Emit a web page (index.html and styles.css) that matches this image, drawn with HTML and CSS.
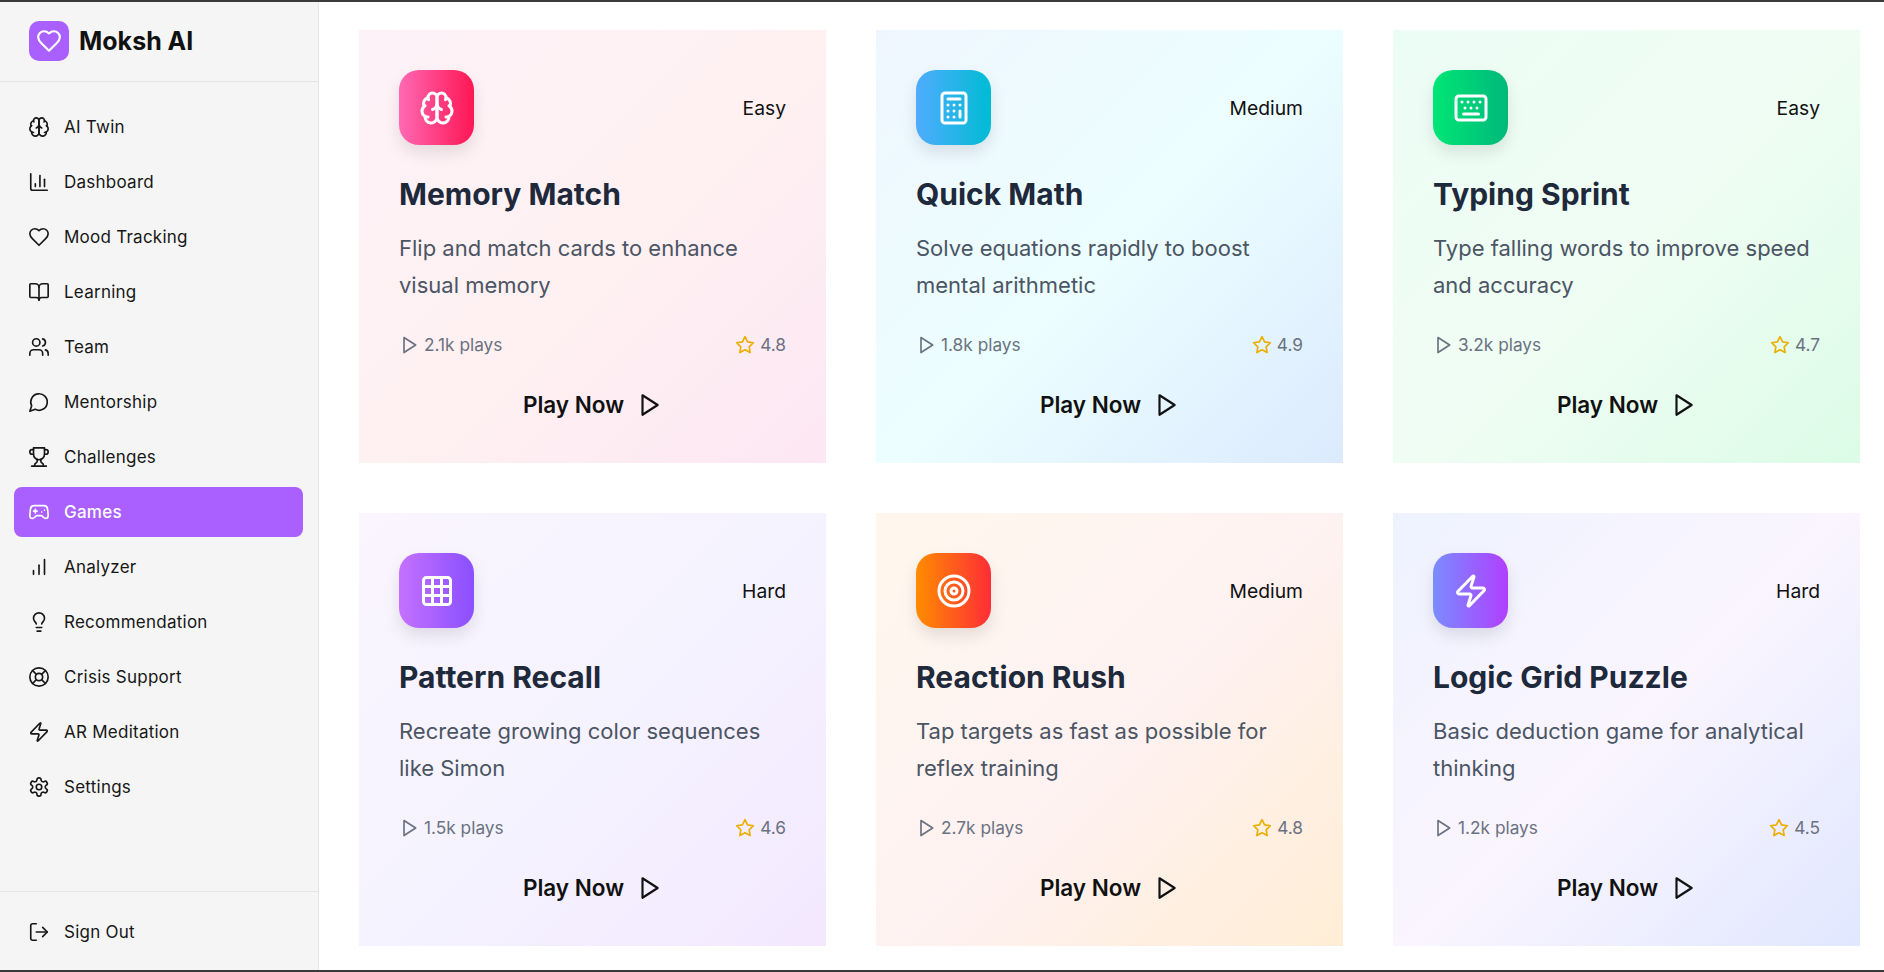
FILE: index.html
```html
<!DOCTYPE html>
<html lang="en">
<head>
    <meta charset="UTF-8">
    <meta name="viewport" content="width=device-width, initial-scale=1.0">
    <title>Moksh AI - Games</title>
    <link rel="stylesheet" href="styles.css">
</head>
<body>
    <svg class="icon-sprite" xmlns="http://www.w3.org/2000/svg">
        <symbol id="i-brain" viewBox="0 0 24 24"><path d="M12 5a3 3 0 1 0-5.997.125 4 4 0 0 0-2.526 5.77 4 4 0 0 0 .556 6.588A4 4 0 1 0 12 18Z"/><path d="M12 5a3 3 0 1 1 5.997.125 4 4 0 0 1 2.526 5.77 4 4 0 0 1-.556 6.588A4 4 0 1 1 12 18Z"/><path d="M15 13a4.5 4.5 0 0 1-3-4 4.5 4.5 0 0 1-3 4"/><path d="M17.599 6.5a3 3 0 0 0 .399-1.375"/><path d="M6.003 5.125A3 3 0 0 0 6.401 6.5"/><path d="M3.477 10.896a4 4 0 0 1 .585-.396"/><path d="M19.938 10.5a4 4 0 0 1 .585.396"/><path d="M6 18a4 4 0 0 1-1.967-.516"/><path d="M19.967 17.484A4 4 0 0 1 18 18"/></symbol>
        <symbol id="i-chart" viewBox="0 0 24 24"><path d="M3 3v16a2 2 0 0 0 2 2h16"/><path d="M18 17V9"/><path d="M13 17V5"/><path d="M8 17v-3"/></symbol>
        <symbol id="i-heart" viewBox="0 0 24 24"><path d="M19 14c1.49-1.46 3-3.21 3-5.5A5.5 5.5 0 0 0 16.5 3c-1.76 0-3 .5-4.5 2-1.5-1.5-2.74-2-4.5-2A5.5 5.5 0 0 0 2 8.5c0 2.3 1.5 4.05 3 5.5l7 7Z"/></symbol>
        <symbol id="i-book" viewBox="0 0 24 24"><path d="M12 7v14"/><path d="M3 18a1 1 0 0 1-1-1V4a1 1 0 0 1 1-1h5a4 4 0 0 1 4 4 4 4 0 0 1 4-4h5a1 1 0 0 1 1 1v13a1 1 0 0 1-1 1h-6a3 3 0 0 0-3 3 3 3 0 0 0-3-3z"/></symbol>
        <symbol id="i-users" viewBox="0 0 24 24"><path d="M16 21v-2a4 4 0 0 0-4-4H6a4 4 0 0 0-4 4v2"/><circle cx="9" cy="7" r="4"/><path d="M22 21v-2a4 4 0 0 0-3-3.87"/><path d="M16 3.13a4 4 0 0 1 0 7.75"/></symbol>
        <symbol id="i-message" viewBox="0 0 24 24"><path d="M7.9 20A9 9 0 1 0 4 16.1L2 22Z"/></symbol>
        <symbol id="i-trophy" viewBox="0 0 24 24"><path d="M6 9H4.5a2.5 2.5 0 0 1 0-5H6"/><path d="M18 9h1.5a2.5 2.5 0 0 0 0-5H18"/><path d="M4 22h16"/><path d="M10 14.66V17c0 .55-.47.98-.97 1.21C7.85 18.75 7 20.24 7 22"/><path d="M14 14.66V17c0 .55.47.98.97 1.21C16.15 18.75 17 20.24 17 22"/><path d="M18 2H6v7a6 6 0 0 0 12 0V2Z"/></symbol>
        <symbol id="i-gamepad" viewBox="0 0 24 24"><path d="M6 11h4"/><path d="M8 9v4"/><path d="M15 12h.01"/><path d="M18 10h.01"/><path d="M17.32 5H6.68a4 4 0 0 0-3.978 3.59c-.006.052-.01.101-.017.152C2.604 9.416 2 14.456 2 16a3 3 0 0 0 3 3c1 0 1.5-.5 2-1l1.414-1.414A2 2 0 0 1 9.828 16h4.344a2 2 0 0 1 1.414.586L17 18c.5.5 1 1 2 1a3 3 0 0 0 3-3c0-1.545-.604-6.584-.685-7.258-.007-.05-.011-.1-.017-.151A4 4 0 0 0 17.32 5z"/></symbol>
        <symbol id="i-bars" viewBox="0 0 24 24"><path d="M12 20V10"/><path d="M18 20V4"/><path d="M6 20v-4"/></symbol>
        <symbol id="i-bulb" viewBox="0 0 24 24"><path d="M15 14c.2-1 .7-1.7 1.5-2.5 1-.9 1.5-2.2 1.5-3.5A6 6 0 0 0 6 8c0 1 .2 2.2 1.5 3.5.7.7 1.3 1.5 1.5 2.5"/><path d="M9 18h6"/><path d="M10 22h4"/></symbol>
        <symbol id="i-buoy" viewBox="0 0 24 24"><circle cx="12" cy="12" r="10"/><path d="m4.93 4.93 4.24 4.24"/><path d="m14.83 9.17 4.24-4.24"/><path d="m14.83 14.83 4.24 4.24"/><path d="m9.17 14.83-4.24 4.24"/><circle cx="12" cy="12" r="4"/></symbol>
        <symbol id="i-zap" viewBox="0 0 24 24"><path d="M4 14a1 1 0 0 1-.78-1.63l9.9-10.2a.5.5 0 0 1 .86.46l-1.92 6.02A1 1 0 0 0 13 10h7a1 1 0 0 1 .78 1.63l-9.9 10.2a.5.5 0 0 1-.86-.46l1.92-6.02A1 1 0 0 0 11 14z"/></symbol>
        <symbol id="i-settings" viewBox="0 0 24 24"><path d="M12.22 2h-.44a2 2 0 0 0-2 2v.18a2 2 0 0 1-1 1.73l-.43.25a2 2 0 0 1-2 0l-.15-.08a2 2 0 0 0-2.73.73l-.22.38a2 2 0 0 0 .73 2.73l.15.1a2 2 0 0 1 1 1.72v.51a2 2 0 0 1-1 1.74l-.15.09a2 2 0 0 0-.73 2.73l.22.38a2 2 0 0 0 2.73.73l.15-.08a2 2 0 0 1 2 0l.43.25a2 2 0 0 1 1 1.73V20a2 2 0 0 0 2 2h.44a2 2 0 0 0 2-2v-.18a2 2 0 0 1 1-1.73l.43-.25a2 2 0 0 1 2 0l.15.08a2 2 0 0 0 2.73-.73l.22-.39a2 2 0 0 0-.73-2.73l-.15-.08a2 2 0 0 1-1-1.74v-.5a2 2 0 0 1 1-1.74l.15-.09a2 2 0 0 0 .73-2.73l-.22-.38a2 2 0 0 0-2.73-.73l-.15.08a2 2 0 0 1-2 0l-.43-.25a2 2 0 0 1-1-1.73V4a2 2 0 0 0-2-2z"/><circle cx="12" cy="12" r="3"/></symbol>
        <symbol id="i-logout" viewBox="0 0 24 24"><path d="M9 21H5a2 2 0 0 1-2-2V5a2 2 0 0 1 2-2h4"/><path d="m16 17 5-5-5-5"/><path d="M21 12H9"/></symbol>
        <symbol id="i-play" viewBox="0 0 24 24"><path d="M6 3l14 9-14 9z"/></symbol>
        <symbol id="i-star" viewBox="0 0 24 24"><path d="M12 2l3.09 6.26L22 9.27l-5 4.87 1.18 6.88L12 17.77l-6.18 3.25L7 14.14 2 9.27l6.91-1.01L12 2z"/></symbol>
        <symbol id="i-calc" viewBox="0 0 24 24"><rect width="16" height="20" x="4" y="2" rx="2"/><path d="M8 6h8"/><path d="M16 14v4"/><path d="M16 10h.01"/><path d="M12 10h.01"/><path d="M8 10h.01"/><path d="M12 14h.01"/><path d="M8 14h.01"/><path d="M12 18h.01"/><path d="M8 18h.01"/></symbol>
        <symbol id="i-keyboard" viewBox="0 0 24 24"><path d="M10 8h.01"/><path d="M12 12h.01"/><path d="M14 8h.01"/><path d="M16 12h.01"/><path d="M18 8h.01"/><path d="M6 8h.01"/><path d="M7 16h10"/><path d="M8 12h.01"/><rect width="20" height="16" x="2" y="4" rx="2"/></symbol>
        <symbol id="i-grid" viewBox="0 0 24 24"><rect width="18" height="18" x="3" y="3" rx="2"/><path d="M3 9h18"/><path d="M3 15h18"/><path d="M9 3v18"/><path d="M15 3v18"/></symbol>
        <symbol id="i-target" viewBox="0 0 24 24"><circle cx="12" cy="12" r="10"/><circle cx="12" cy="12" r="6"/><circle cx="12" cy="12" r="2"/></symbol>
    </svg>

    <aside class="sidebar">
        <div class="brand">
            <div class="brand-logo"><svg class="icon"><use href="#i-heart"/></svg></div>
            <div class="brand-name">Moksh AI</div>
        </div>

        <nav class="nav">
            <a class="nav-item" href="#"><svg class="icon"><use href="#i-brain"/></svg>AI Twin</a>
            <a class="nav-item" href="#"><svg class="icon"><use href="#i-chart"/></svg>Dashboard</a>
            <a class="nav-item" href="#"><svg class="icon"><use href="#i-heart"/></svg>Mood Tracking</a>
            <a class="nav-item" href="#"><svg class="icon"><use href="#i-book"/></svg>Learning</a>
            <a class="nav-item" href="#"><svg class="icon"><use href="#i-users"/></svg>Team</a>
            <a class="nav-item" href="#"><svg class="icon"><use href="#i-message"/></svg>Mentorship</a>
            <a class="nav-item" href="#"><svg class="icon"><use href="#i-trophy"/></svg>Challenges</a>
            <a class="nav-item active" href="#"><svg class="icon"><use href="#i-gamepad"/></svg>Games</a>
            <a class="nav-item" href="#"><svg class="icon"><use href="#i-bars"/></svg>Analyzer</a>
            <a class="nav-item" href="#"><svg class="icon"><use href="#i-bulb"/></svg>Recommendation</a>
            <a class="nav-item" href="#"><svg class="icon"><use href="#i-buoy"/></svg>Crisis Support</a>
            <a class="nav-item" href="#"><svg class="icon"><use href="#i-zap"/></svg>AR Meditation</a>
            <a class="nav-item" href="#"><svg class="icon"><use href="#i-settings"/></svg>Settings</a>
        </nav>

        <div class="sidebar-footer">
            <a class="nav-item" href="#"><svg class="icon"><use href="#i-logout"/></svg>Sign Out</a>
        </div>
    </aside>

    <main class="games">
        <article class="card card-pink">
            <div class="card-top">
                <div class="card-icon"><svg class="icon"><use href="#i-brain"/></svg></div>
                <span class="level">Easy</span>
            </div>
            <h3>Memory Match</h3>
            <p>Flip and match cards to enhance visual memory</p>
            <div class="stats">
                <span class="stat"><svg class="icon"><use href="#i-play"/></svg>2.1k plays</span>
                <span class="stat"><svg class="icon star"><use href="#i-star"/></svg>4.8</span>
            </div>
            <button class="play" type="button">Play Now<svg class="icon"><use href="#i-play"/></svg></button>
        </article>

        <article class="card card-blue">
            <div class="card-top">
                <div class="card-icon"><svg class="icon"><use href="#i-calc"/></svg></div>
                <span class="level">Medium</span>
            </div>
            <h3>Quick Math</h3>
            <p>Solve equations rapidly to boost mental arithmetic</p>
            <div class="stats">
                <span class="stat"><svg class="icon"><use href="#i-play"/></svg>1.8k plays</span>
                <span class="stat"><svg class="icon star"><use href="#i-star"/></svg>4.9</span>
            </div>
            <button class="play" type="button">Play Now<svg class="icon"><use href="#i-play"/></svg></button>
        </article>

        <article class="card card-green">
            <div class="card-top">
                <div class="card-icon"><svg class="icon"><use href="#i-keyboard"/></svg></div>
                <span class="level">Easy</span>
            </div>
            <h3>Typing Sprint</h3>
            <p>Type falling words to improve speed and accuracy</p>
            <div class="stats">
                <span class="stat"><svg class="icon"><use href="#i-play"/></svg>3.2k plays</span>
                <span class="stat"><svg class="icon star"><use href="#i-star"/></svg>4.7</span>
            </div>
            <button class="play" type="button">Play Now<svg class="icon"><use href="#i-play"/></svg></button>
        </article>

        <article class="card card-purple">
            <div class="card-top">
                <div class="card-icon"><svg class="icon"><use href="#i-grid"/></svg></div>
                <span class="level">Hard</span>
            </div>
            <h3>Pattern Recall</h3>
            <p>Recreate growing color sequences like Simon</p>
            <div class="stats">
                <span class="stat"><svg class="icon"><use href="#i-play"/></svg>1.5k plays</span>
                <span class="stat"><svg class="icon star"><use href="#i-star"/></svg>4.6</span>
            </div>
            <button class="play" type="button">Play Now<svg class="icon"><use href="#i-play"/></svg></button>
        </article>

        <article class="card card-orange">
            <div class="card-top">
                <div class="card-icon"><svg class="icon"><use href="#i-target"/></svg></div>
                <span class="level">Medium</span>
            </div>
            <h3>Reaction Rush</h3>
            <p>Tap targets as fast as possible for reflex training</p>
            <div class="stats">
                <span class="stat"><svg class="icon"><use href="#i-play"/></svg>2.7k plays</span>
                <span class="stat"><svg class="icon star"><use href="#i-star"/></svg>4.8</span>
            </div>
            <button class="play" type="button">Play Now<svg class="icon"><use href="#i-play"/></svg></button>
        </article>

        <article class="card card-indigo">
            <div class="card-top">
                <div class="card-icon"><svg class="icon"><use href="#i-zap"/></svg></div>
                <span class="level">Hard</span>
            </div>
            <h3>Logic Grid Puzzle</h3>
            <p>Basic deduction game for analytical thinking</p>
            <div class="stats">
                <span class="stat"><svg class="icon"><use href="#i-play"/></svg>1.2k plays</span>
                <span class="stat"><svg class="icon star"><use href="#i-star"/></svg>4.5</span>
            </div>
            <button class="play" type="button">Play Now<svg class="icon"><use href="#i-play"/></svg></button>
        </article>
    </main>
</body>
</html>
```

FILE: styles.css
```css
* {
    box-sizing: border-box;
}

html, body {
    height: 100%;
}

body {
    margin: 0;
    display: flex;
    overflow: hidden;
    font-family: Inter, "Noto Sans", sans-serif;
    color: #111827;
    background-color: #ffffff;
    border-top: 2px solid #3a3a3a;
    border-bottom: 2px solid #3a3a3a;
}

.icon-sprite {
    display: none;
}

.icon {
    fill: none;
    stroke: currentColor;
    stroke-width: 2;
    stroke-linecap: round;
    stroke-linejoin: round;
    flex-shrink: 0;
}

/* sidebar */
.sidebar {
    width: 319px;
    flex-shrink: 0;
    display: flex;
    flex-direction: column;
    background-color: #f5f5f5;
    border-right: 1px solid #e5e5e5;
}

.brand {
    height: 80px;
    display: flex;
    align-items: center;
    gap: 10px;
    padding: 0 29px 1px;
    border-bottom: 1px solid #e5e5e5;
}

.brand-logo {
    width: 40px;
    height: 40px;
    display: flex;
    align-items: center;
    justify-content: center;
    color: #ffffff;
    background-color: #a960ff;
    border-radius: 10px;
}

.brand-logo .icon {
    width: 26px;
    height: 26px;
}

.brand-name {
    font-size: 25px;
    font-weight: 700;
    color: #111111;
}

.nav {
    display: flex;
    flex-direction: column;
    gap: 5px;
    padding: 20px 15px 0 14px;
}

.nav-item {
    height: 50px;
    display: flex;
    align-items: center;
    gap: 14px;
    padding-left: 14px;
    font-size: 17px;
    font-weight: 400;
    letter-spacing: 0.25px;
    color: #171717;
    text-decoration: none;
    border-radius: 8px;
}

.nav-item .icon {
    width: 22px;
    height: 22px;
    stroke-width: 1.8;
}

.nav-item.active {
    font-weight: 500;
    color: #ffffff;
    background-color: #a960ff;
}

.sidebar-footer {
    margin-top: auto;
    padding: 15px 15px 13px 14px;
    border-top: 1px solid #e5e5e5;
}

/* cards */
.games {
    flex: 1;
    display: grid;
    grid-template-columns: repeat(3, 467px);
    grid-auto-rows: 433px;
    gap: 50px;
    padding: 28px 24px 0 40px;
}

.card {
    padding: 40px 40px 33px;
}

.card-pink {
    background: linear-gradient(135deg, #fdf2f8, #fff1f2, #fce7f3);
}

.card-blue {
    background: linear-gradient(135deg, #eff6ff, #ecfeff, #dbeafe);
}

.card-green {
    background: linear-gradient(135deg, #ecfdf5, #f0fdf4, #dcfce7);
}

.card-purple {
    background: linear-gradient(135deg, #faf5ff, #f5f3ff, #f3e8ff);
}

.card-orange {
    background: linear-gradient(135deg, #fff7ed, #fef2f2, #ffedd5);
}

.card-indigo {
    background: linear-gradient(135deg, #eef2ff, #faf5ff, #e0e7ff);
}

.card-top {
    display: flex;
    justify-content: space-between;
    align-items: center;
}

.card-icon {
    width: 75px;
    height: 75px;
    display: flex;
    align-items: center;
    justify-content: center;
    color: #ffffff;
    border-radius: 20px;
    box-shadow: 0 8px 16px rgba(0, 0, 0, 0.1);
}

.card-icon .icon {
    width: 36px;
    height: 36px;
}

.card-pink .card-icon {
    background: linear-gradient(90deg, #ff69b4, #ff1654);
}

.card-blue .card-icon {
    background: linear-gradient(90deg, #4facfe, #00bcd4);
}

.card-green .card-icon {
    background: linear-gradient(90deg, #00e676, #00b87a);
}

.card-purple .card-icon {
    background: linear-gradient(90deg, #c471ff, #8a4fff);
}

.card-orange .card-icon {
    background: linear-gradient(90deg, #ff8c00, #ff2d37);
}

.card-indigo .card-icon {
    background: linear-gradient(90deg, #7a8cff, #b03fff);
}

.level {
    font-size: 19.3px;
    color: #111111;
}

.card h3 {
    margin: 31px 0 0;
    font-size: 30px;
    line-height: 36px;
    font-weight: 700;
    color: #1e293b;
}

.card p {
    margin: 18px 0 0;
    font-size: 22px;
    line-height: 37px;
    color: #4b5563;
}

.stats {
    display: flex;
    justify-content: space-between;
    align-items: center;
    height: 24px;
    margin-top: 28px;
}

.stat {
    display: flex;
    align-items: center;
    gap: 5px;
    font-size: 17.3px;
    color: #6b7280;
}

.stat .icon {
    width: 20px;
    height: 20px;
    margin-top: 2px;
}

.stat .star {
    color: #ecae00;
}

.play {
    width: 100%;
    height: 50px;
    margin-top: 23px;
    display: flex;
    align-items: center;
    justify-content: center;
    gap: 12px;
    padding: 0;
    font-family: inherit;
    font-size: 22.5px;
    font-weight: 600;
    color: #111111;
    background: none;
    border: none;
    cursor: pointer;
}

.play .icon {
    width: 26px;
    height: 26px;
    margin-top: 2px;
}
```
